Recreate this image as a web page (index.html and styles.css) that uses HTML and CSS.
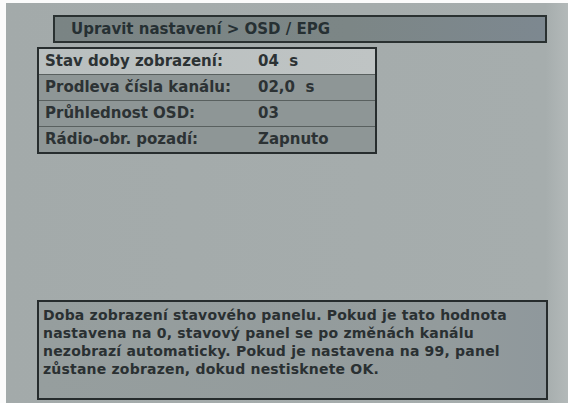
FILE: index.html
```html
<!DOCTYPE html>
<html lang="cs">
<head>
<meta charset="utf-8">
<title>OSD / EPG</title>
<link rel="stylesheet" href="styles.css">
</head>
<body>
<div class="screen">
  <div class="header">Upravit nastavení &gt; OSD / EPG</div>
  <div class="menu">
    <div class="row selected"><span class="label">Stav doby zobrazení:</span><span class="value">04&nbsp; s</span></div>
    <div class="row"><span class="label">Prodleva čísla kanálu:</span><span class="value">02,0&nbsp; s</span></div>
    <div class="row"><span class="label">Průhlednost OSD:</span><span class="value">03</span></div>
    <div class="row"><span class="label">Rádio-obr. pozadí:</span><span class="value">Zapnuto</span></div>
  </div>
  <div class="info">Doba zobrazení stavového panelu. Pokud je tato hodnota<br>nastavena na 0, stavový panel se po změnách kanálu<br>nezobrazí automaticky. Pokud je nastavena na 99, panel<br>zůstane zobrazen, dokud nestisknete OK.</div>
</div>
</body>
</html>
```

FILE: styles.css
```css
html, body {
  margin: 0;
  padding: 0;
  background: #fbfbfb;
}

body {
  font-family: "DejaVu Sans", "Liberation Sans", sans-serif;
  font-weight: bold;
  color: #2a3033;
}

.screen {
  margin: 3px 0 0 6px;
  width: 562px;
  height: 400px;
  box-sizing: border-box;
  background: linear-gradient(90deg, #a3aaaa 0%, #a6adad 96%, #b3b9b9 100%);
  display: flex;
  flex-direction: column;
  padding-top: 12px;
}

.header {
  margin-left: 47px;
  width: 494px;
  height: 28px;
  box-sizing: border-box;
  border: 2px solid #2a3131;
  background: linear-gradient(90deg, #7a8484 0%, #7c8686 60%, #7d8890 100%);
  font-size: 15px;
  line-height: 24px;
  padding-left: 16px;
  color: #263033;
}

.menu {
  margin: 4px 0 0 31px;
  width: 340px;
  box-sizing: border-box;
  border: 2px solid #272d2e;
  display: flex;
  flex-direction: column;
}

.row {
  display: flex;
  height: 26px;
  box-sizing: border-box;
  border-top: 1px solid #59605f;
  background: #8e9696;
  font-size: 15px;
  line-height: 25px;
  color: #2c3234;
}

.row.selected {
  border-top: none;
  height: 25px;
  background: linear-gradient(90deg, #b9bfbf 0%, #bfc4c4 100%);
}

.label {
  width: 219px;
  padding-left: 6px;
  box-sizing: border-box;
}

.value {
  flex: 1;
}

.info {
  margin: auto 0 3px 31px;
  width: 511px;
  height: 100px;
  box-sizing: border-box;
  border: 2px solid #262c2d;
  background: linear-gradient(90deg, #969e9e 0%, #939b9c 80%, #8f989c 100%);
  font-size: 14px;
  letter-spacing: 0.2px;
  line-height: 18px;
  padding: 4px 0 0 4px;
  color: #2a3032;
  white-space: nowrap;
}
```
